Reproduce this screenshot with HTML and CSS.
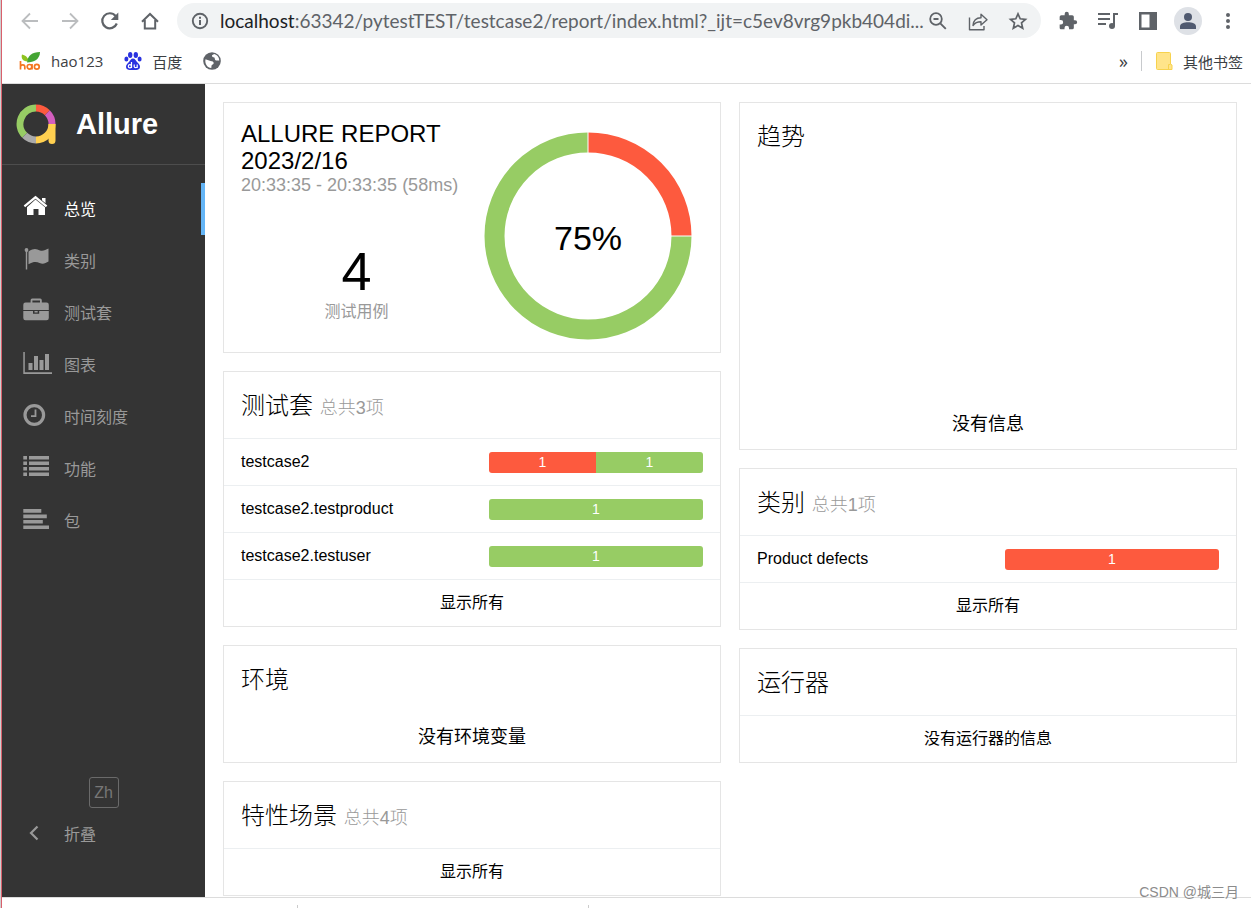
FILE: index.html
```html
<!DOCTYPE html>
<html lang="zh-CN">
<head>
<meta charset="utf-8">
<title>Allure Report</title>
<link rel="stylesheet" href="styles.css">
</head>
<body>
<div class="window">
  <header class="toolbar">
    <button class="tool tool-off" aria-label="后退"><svg width="20" height="20" viewBox="0 0 20 20"><path d="M18 10H3M10 2.500 2.500 10l7.500 7.500" fill="none" stroke="currentColor" stroke-width="1.800"/></svg></button>
    <button class="tool tool-off" aria-label="前进"><svg width="20" height="20" viewBox="0 0 20 20"><path d="M2 10h15M10 2.500 17.500 10 10 17.500" fill="none" stroke="currentColor" stroke-width="1.800"/></svg></button>
    <button class="tool" aria-label="刷新"><svg width="20" height="20" viewBox="0 0 20 20"><path d="M16.800 12.500A7.500 7.500 0 1 1 15.600 5" fill="none" stroke="currentColor" stroke-width="2.200"/><path d="M18.300 1.500v7.500h-7.500z" fill="currentColor"/></svg></button>
    <button class="tool" aria-label="主页"><svg width="20" height="20" viewBox="0 0 20 20"><path d="M2 10.800 10 3l8 7.800M4.800 9v8.500h10.400V9" fill="none" stroke="currentColor" stroke-width="2"/></svg></button>
    <div class="omnibox">
      <svg class="info" width="18" height="18" viewBox="0 0 18 18"><circle cx="9" cy="9" r="7.200" fill="none" stroke="currentColor" stroke-width="1.900"/><path d="M9 8v5M9 4.800v1.900" stroke="currentColor" stroke-width="2"/></svg>
      <label class="host" for="address">localhost</label>
      <input class="address" id="address" type="text" value=":63342/pytestTEST/testcase2/report/index.html?_ijt=c5ev8vrg9pkb404di...">
      <button class="tool tool-narrow" aria-label="缩放"><svg width="20" height="20" viewBox="0 0 20 20"><circle cx="8" cy="8" r="5.800" fill="none" stroke="currentColor" stroke-width="1.800"/><path d="M5.500 8h5M12.300 12.300l5.500 5.500" fill="none" stroke="currentColor" stroke-width="1.900"/></svg></button>
      <button class="tool" aria-label="分享"><svg width="20" height="20" viewBox="0 0 20 20"><path d="M1.500 6.500v12.300h14.500V15M5 14.500c.4-5.500 3.200-7.700 8-7.800V3.300l6 5.400-6 5.400v-3.400c-3.800 0-6 .9-8 3.800z" fill="none" stroke="currentColor" stroke-width="1.400" stroke-linejoin="round"/></svg></button>
      <button class="tool" aria-label="加入书签"><svg width="20" height="20" viewBox="0 0 20 20"><path d="m10 2.800 2.200 5 5.300.5-4 3.600 1.200 5.300-4.700-2.800-4.700 2.800 1.200-5.300-4-3.600 5.300-.5z" fill="none" stroke="currentColor" stroke-width="1.700"/></svg></button>
    </div>
    <button class="tool" aria-label="扩展程序"><svg width="20" height="20" viewBox="0 0 24 24"><path d="M20.500 11H19V7a2 2 0 0 0-2-2h-4V3.500a2.500 2.500 0 0 0-5 0V5H4a2 2 0 0 0-2 2v3.800h1.500a2.700 2.700 0 0 1 0 5.400H2V20c0 1.100.9 2 2 2h3.800v-1.500a2.700 2.700 0 0 1 5.400 0V22H17a2 2 0 0 0 2-2v-4h1.500a2.500 2.500 0 0 0 0-5z" fill="currentColor"/></svg></button>
    <button class="tool" aria-label="媒体控制"><svg width="22" height="20" viewBox="0 0 22 20"><path d="M1 3h12M1 8h12M1 13h8M17 15V3h4" fill="none" stroke="currentColor" stroke-width="2"/><circle cx="15" cy="15" r="3" fill="currentColor"/></svg></button>
    <button class="tool" aria-label="侧边栏"><svg width="20" height="20" viewBox="0 0 20 20"><path d="M1 1h18v18H1zM3.500 3.500v13h8v-13z" fill="currentColor" fill-rule="evenodd"/></svg></button>
    <button class="tool" aria-label="用户"><svg width="28" height="28" viewBox="0 0 28 28"><circle cx="14" cy="14" r="14" fill="#dee1e6"/><circle cx="14" cy="10" r="4" fill="#505a70"/><path d="M6 22v-2.500c0-3 4-4.200 8-4.200s8 1.200 8 4.200V22z" fill="#505a70"/></svg></button>
    <button class="tool" aria-label="更多"><svg width="20" height="20" viewBox="0 0 20 20"><g fill="currentColor"><circle cx="10" cy="4" r="2"/><circle cx="10" cy="10" r="2"/><circle cx="10" cy="16" r="2"/></g></svg></button>
  </header>

  <nav class="bookmarks" aria-label="书签">
    <a class="bookmark" href="#"><svg width="22" height="20" viewBox="0 0 22 20"><path d="M7.500 10.500C3 9.500 2 6.500 3 3.500c3 .5 5.500 2.500 6.500 5.500z" fill="#8fc31f"/><path d="M8 11.500C8.500 5 13 1 21 1c0 7-6 10.500-13 10.500z" fill="#45a534"/><g fill="none" stroke="#f4751f" stroke-width="1.700"><path d="M1.500 10v8.500M1.500 15.500c.5-2.300 4.300-2.300 4.300.3v2.700M13 13v5.500"/><circle cx="10.500" cy="15.800" r="2.300"/><circle cx="17.800" cy="15.800" r="2.400"/></g></svg>hao123</a>
    <a class="bookmark" href="#"><svg width="18" height="20" viewBox="0 0 18 20"><g fill="#2a32e0"><ellipse cx="6.200" cy="4" rx="2.200" ry="3"/><ellipse cx="11.800" cy="4" rx="2.200" ry="3"/><ellipse cx="2.400" cy="8" rx="2" ry="2.500"/><ellipse cx="15.600" cy="8" rx="2" ry="2.500"/><path d="M9 7.500c-2 0-2.800 2-4 3.400-1.300 1.500-3.200 2.700-3 5 .2 2.200 2 3 3.800 3h6.400c1.800 0 3.600-.8 3.800-3 .2-2.300-1.700-3.500-3-5C11.800 9.500 11 7.500 9 7.500z"/></g><g fill="none" stroke="#fff" stroke-width="1.200"><path d="M7.500 11v6M10.200 13.500v2c0 1.600 3 1.600 3 0v-2M13.200 15v2"/><circle cx="5.900" cy="15.200" r="1.600"/></g></svg>百度</a>
    <a class="bookmark" href="#" aria-label="网页"><svg width="18" height="18" viewBox="0 0 18 18"><circle cx="9" cy="9" r="8.800" fill="#5f6368"/><path d="M2.500 7.200 7.500 9c1.800.3 3.200.6 3.200 2 0 1.600-2 1.200-2.200 2.800L8.300 16C4.500 15.800 1.500 12 2.500 7.200zM9 3.200c-.2 1.800 1 2 2.400 2.200.6 1 .2 2.400 1.600 3 1 .4 2-.2 3.200.4.2-3-1.800-6-5-6.800z" fill="#fff"/></svg></a>
    <button class="overflow" aria-label="更多书签">»</button>
    <a class="bookmark others" href="#"><svg width="17" height="18" viewBox="0 0 17 18"><path d="M1.500.5h12q1 0 1 1v10.500l1.500 1v4.500H1.500q-1 0-1-1v-15q0-1 1-1z" fill="#ffe48a" stroke="#f7d24e"/><path d="M12.500 17v-4.500h2" fill="none" stroke="#f7d24e"/></svg>其他书签</a>
  </nav>

  <div class="app">
    <aside class="side">
      <div class="brand">
        <svg width="40" height="40" viewBox="0 0 40 40"><g fill="none" stroke-width="7"><path d="M8.700 31.300A16 16 0 0 1 20 4" stroke="#97cc64"/><path d="M20 4a16 16 0 0 1 11.300 4.700" stroke="#fd5a3e"/><path d="M31.300 8.700A16 16 0 0 1 36 20" stroke="#d35ebe"/><path d="M36 20A16 16 0 0 1 20 36" stroke="#ffd050"/><path d="M20 36a16 16 0 0 1-11.300-4.700" stroke="#aaa"/></g><path d="M32.500 20h7v16.500a3.500 3.500 0 0 1-7 0z" fill="#ffd050"/></svg>
        <span>Allure</span>
      </div>
      <nav class="menu" aria-label="报告">
        <a class="item item-on" href="#"><svg width="30" height="30" viewBox="0 0 30 30"><path d="M19 5h3.500v5.200l-3.500-3zM12.500 6.500 22 14.300V22h-6.500v-6h-5v6H4v-7.700zM12.500 2.700 24.300 12.500l-1.400 1.700L12.500 5.700 2.100 14.200.7 12.500z" fill="currentColor"/></svg>总览</a>
        <a class="item" href="#"><svg width="30" height="30" viewBox="0 0 30 30"><circle cx="3.500" cy="5" r="1.900" fill="currentColor"/><path d="M2.800 5h1.400v19.500H2.800zM5.500 6.500c6-4 8-2.500 11.500-1 3 1 5.500-.5 8.500-2v13c-3 1.800-5.500 3-9 1.500-3-1.300-6-1.500-11 1.300z" fill="currentColor"/></svg>类别</a>
        <a class="item" href="#"><svg width="30" height="30" viewBox="0 0 30 30"><path d="M8.500 6V3.200q0-.7.700-.7h8q.7 0 .7.700V6" fill="none" stroke="currentColor" stroke-width="1.800"/><path d="M2.500 5.500h21q2.300 0 2.300 2.300v5.200H.3V7.800q0-2.300 2.200-2.300zM.3 14h9.700v2.800h6.200V14h9.600v7q0 2.300-2.300 2.300h-21Q.3 23.300.3 21zM11.500 14h3.200v1.400h-3.200z" fill="currentColor"/></svg>测试套</a>
        <a class="item" href="#"><svg width="30" height="30" viewBox="0 0 30 30"><path d="M.3 3h1.500v20.300H29V25H.3zM5.500 14h4v7h-4zM11 7h4v14h-4zM16.500 11h4v10h-4zM22 5h4v16h-4z" fill="currentColor"/></svg>图表</a>
        <a class="item" href="#"><svg width="30" height="30" viewBox="0 0 30 30"><circle cx="11.300" cy="14" r="9.300" fill="none" stroke="currentColor" stroke-width="3.200"/><path d="M12.500 8.500v6.700H8" fill="none" stroke="currentColor" stroke-width="1.800"/></svg>时间刻度</a>
        <a class="item" href="#"><svg width="30" height="30" viewBox="0 0 30 30"><path d="M.3 3H4v3.500H.3zM6 3h20v3.500H6zM.3 8.500H4V12H.3zM6 8.500h20V12H6zM.3 14H4v3.500H.3zM6 14h20v3.500H6zM.3 19.500H4V23H.3zM6 19.500h20V23H6z" fill="currentColor"/></svg>功能</a>
        <a class="item" href="#"><svg width="30" height="30" viewBox="0 0 30 30"><path d="M.3 4h18v3.700H.3zM.3 9.600h23.500v3.600H.3zM.3 15h19.500v3.600H.3zM.3 20.400H26V24H.3z" fill="currentColor"/></svg>包</a>
      </nav>
      <div class="side-foot">
        <button class="lang">Zh</button>
        <button class="item"><svg width="30" height="30" viewBox="0 0 30 30"><path d="m14.500 8.500-6.500 6.500 6.500 6.500" fill="none" stroke="currentColor" stroke-width="2.200"/></svg>折叠</button>
      </div>
    </aside>

    <main class="board">
      <div class="column">
        <section class="card summary">
          <div class="facts">
            <h2 class="heading">ALLURE REPORT<br>2023/2/16</h2>
            <p class="time">20:33:35 - 20:33:35 (58ms)</p>
            <div class="count">4</div>
            <div class="count-label">测试用例</div>
          </div>
          <svg class="donut" viewBox="0 0 208 208" role="img" aria-label="75%"><g fill="none" stroke-width="20"><path d="M104 10.500A93.500 93.500 0 0 1 197.500 104" stroke="#fd5a3e"/><path d="M197.500 104A93.500 93.500 0 1 1 104 10.500" stroke="#97cc64"/></g><path d="M104 0v21M187 104h21" stroke="#fff"/><text class="donut-text" x="104" y="118">75%</text></svg>
        </section>

        <section class="card">
          <h2 class="title">测试套 <small>总共3项</small></h2>
          <a class="row" href="#"><span>testcase2</span><span class="bar"><span class="failed">1</span><span class="passed">1</span></span></a>
          <a class="row" href="#"><span>testcase2.testproduct</span><span class="bar"><span class="passed">1</span></span></a>
          <a class="row" href="#"><span>testcase2.testuser</span><span class="bar"><span class="passed">1</span></span></a>
          <a class="row row-center" href="#">显示所有</a>
        </section>

        <section class="card">
          <h2 class="title">环境</h2>
          <p class="empty">没有环境变量</p>
        </section>

        <section class="card">
          <h2 class="title">特性场景 <small>总共4项</small></h2>
          <a class="row row-center" href="#">显示所有</a>
        </section>
      </div>

      <div class="column">
        <section class="card">
          <h2 class="title">趋势</h2>
          <p class="empty empty-chart">没有信息</p>
        </section>

        <section class="card">
          <h2 class="title">类别 <small>总共1项</small></h2>
          <a class="row" href="#"><span>Product defects</span><span class="bar"><span class="failed">1</span></span></a>
          <a class="row row-center" href="#">显示所有</a>
        </section>

        <section class="card">
          <h2 class="title">运行器</h2>
          <p class="row row-center">没有运行器的信息</p>
        </section>
      </div>
    </main>
  </div>
  <footer class="strip"><span class="tick"></span><span class="tick"></span></footer>
  <div class="watermark">CSDN @城三月</div>
</div>
</body>
</html>
```
FILE: styles.css
```css
* { box-sizing: border-box; }

body {
  margin: 0;
  border-left: 1px solid #cfcfcf;
  background: #fff;
  color: #000;
  font-family: "Liberation Sans", "Noto Sans CJK SC", sans-serif;
  font-size: 16px;
}

h2, p { margin: 0; font-weight: 400; }
a { color: inherit; text-decoration: none; }
button { padding: 0; border: 0; background: none; color: inherit; font: inherit; }
svg { display: block; flex: none; }

.window {
  position: relative;
  display: flex;
  flex-direction: column;
  min-height: 100vh;
  border-left: 1px solid #d9606c;
}

/* Browser chrome */
.toolbar {
  display: flex;
  align-items: center;
  height: 41px;
  padding: 0 3px 0 8px;
  color: #5f6368;
}
.tool { display: grid; place-items: center; width: 40px; height: 32px; }
.tool-off { color: #bbbdbf; }
.tool-narrow { width: 30px; padding-right: 10px; justify-content: start; }
.omnibox {
  display: flex;
  flex: 1;
  align-items: center;
  height: 35px;
  margin: 0 7px;
  padding: 0 3px 0 14px;
  border-radius: 18px;
  background: #f1f3f4;
  font-family: Lato, "Noto Sans", sans-serif;
  font-size: 19px;
}
.info { margin-right: 11px; }
.host { color: #202124; }
.address {
  flex: 1;
  min-width: 0;
  padding: 0;
  border: 0;
  background: none;
  color: #5f6368;
  font: inherit;
}
.bookmarks {
  display: flex;
  align-items: center;
  gap: 21px;
  height: 43px;
  padding: 0 8px 2px 17px;
  border-bottom: 1px solid #dcdcdc;
  color: #3c4043;
  font-family: "Open Sans", "Noto Sans CJK SC", sans-serif;
  font-size: 15px;
}
.bookmark { display: flex; align-items: center; gap: 10px; }
.overflow { margin-left: auto; font-size: 18px; line-height: 20px; }
.others { height: 20px; margin-left: -8px; padding-left: 14px; border-left: 1px solid #c8cacd; }

/* Report */
.app { display: flex; flex: 1; border-bottom: 1px solid #dcdcdc; }
.side {
  display: flex;
  flex: none;
  flex-direction: column;
  width: 203px;
  background: #343434;
  color: #999;
}
.brand {
  display: flex;
  align-items: center;
  gap: 20px;
  height: 81px;
  padding-left: 14px;
  border-bottom: 1px solid #4d4d4d;
  color: #fff;
  font-size: 29px;
  font-weight: 700;
}
.menu { padding-top: 18px; }
.item {
  display: flex;
  align-items: center;
  gap: 11px;
  width: 100%;
  height: 52px;
  padding: 0 0 2px 21px;
}
.item-on { border-right: 4px solid #64b5f6; color: #fff; }
.side-foot { display: flex; flex-direction: column; align-items: center; margin-top: auto; padding-bottom: 37px; }
.lang { width: 30px; height: 31px; border: 1px solid #6a6a6a; border-radius: 3px; color: #777; }

.board {
  display: grid;
  flex: 1;
  grid-template-columns: 1fr 1fr;
  gap: 18px;
  padding: 18px 14px 1px 18px;
}
.column { display: flex; flex-direction: column; gap: 18px; min-width: 0; }
.card { border: 1px solid #e5e5e5; }
.title { height: 66px; padding: 0 17px; font-size: 24px; font-weight: 300; line-height: 68px; }
.title small { color: #999; font-size: 18px; }

.row {
  display: flex;
  align-items: center;
  justify-content: space-between;
  height: 47px;
  padding: 0 17px;
  border-top: 1px solid #eceff1;
}
.row-center { justify-content: center; padding-bottom: 4px; }
.bar {
  display: flex;
  width: 214px;
  border-radius: 3px;
  overflow: hidden;
  color: #fff;
  font-size: 14px;
  line-height: 21px;
  text-align: center;
}
.bar span { flex: 1; }
.failed { background: #fd5a3e; }
.passed { background: #97cc64; }

.empty { height: 50px; font-size: 18px; line-height: 50px; text-align: center; }
.empty-chart { height: 280px; padding-top: 230px; }

.summary { display: grid; grid-template-columns: 1fr 1fr; padding: 17px 17px 12px; }
.heading { font-size: 24px; line-height: 27px; }
.time { color: #999; font-size: 18px; line-height: 22px; white-space: nowrap; }
.count { padding-top: 45px; font-size: 54px; line-height: 60px; text-align: center; }
.count-label { color: #999; line-height: 22px; text-align: center; }
.donut { width: 208px; margin: 12px auto 0; }
.donut-text { font-size: 34px; text-anchor: middle; }

/* Page bottom */
.strip { display: flex; align-items: flex-end; gap: 290px; height: 10px; padding-left: 295px; }
.tick { width: 1px; height: 3px; background: #ccc; }
.watermark { position: absolute; right: 12px; bottom: 6px; color: #8c8c8c; font-size: 14px; line-height: 20px; }
```
